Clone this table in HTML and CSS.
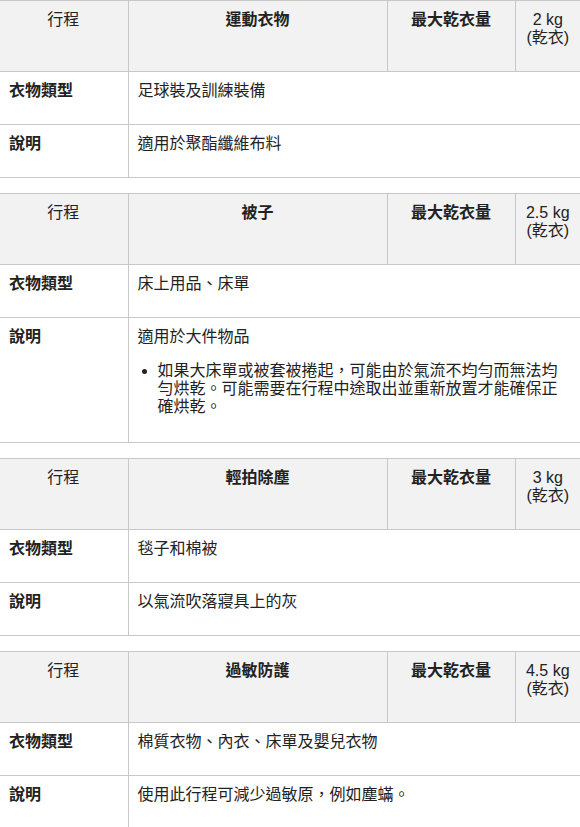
FILE: index.html
```html
<!DOCTYPE html>
<html lang="zh-Hant">
<head>
<meta charset="utf-8">
<title>行程</title>
<link rel="stylesheet" href="styles.css">
</head>
<body>
<div class="page">
  <table class="cycle">
    <colgroup><col class="c1"><col class="c2"><col class="c3"><col class="c4"></colgroup>
    <thead>
      <tr>
        <th class="h-label"><p>行程</p></th>
        <th class="h-name"><p>運動衣物</p></th>
        <th class="h-name"><p>最大乾衣量</p></th>
        <th class="h-load"><p>2 kg (乾衣)</p></th>
      </tr>
    </thead>
    <tbody>
      <tr><th class="row-label"><p>衣物類型</p></th><td colspan="3"><p>足球裝及訓練裝備</p></td></tr>
      <tr><th class="row-label"><p>說明</p></th><td colspan="3"><p>適用於聚酯纖維布料</p></td></tr>
    </tbody>
  </table>

  <table class="cycle">
    <colgroup><col class="c1"><col class="c2"><col class="c3"><col class="c4"></colgroup>
    <thead>
      <tr>
        <th class="h-label"><p>行程</p></th>
        <th class="h-name"><p>被子</p></th>
        <th class="h-name"><p>最大乾衣量</p></th>
        <th class="h-load"><p>2.5 kg (乾衣)</p></th>
      </tr>
    </thead>
    <tbody>
      <tr><th class="row-label"><p>衣物類型</p></th><td colspan="3"><p>床上用品、床單</p></td></tr>
      <tr><th class="row-label"><p>說明</p></th><td colspan="3"><p>適用於大件物品</p>
        <ul><li>如果大床單或被套被捲起，可能由於氣流不均勻而無法均勻烘乾。可能需要在行程中途取出並重新放置才能確保正確烘乾。</li></ul></td></tr>
    </tbody>
  </table>

  <table class="cycle">
    <colgroup><col class="c1"><col class="c2"><col class="c3"><col class="c4"></colgroup>
    <thead>
      <tr>
        <th class="h-label"><p>行程</p></th>
        <th class="h-name"><p>輕拍除塵</p></th>
        <th class="h-name"><p>最大乾衣量</p></th>
        <th class="h-load"><p>3 kg (乾衣)</p></th>
      </tr>
    </thead>
    <tbody>
      <tr><th class="row-label"><p>衣物類型</p></th><td colspan="3"><p>毯子和棉被</p></td></tr>
      <tr><th class="row-label"><p>說明</p></th><td colspan="3"><p>以氣流吹落寢具上的灰</p></td></tr>
    </tbody>
  </table>

  <table class="cycle">
    <colgroup><col class="c1"><col class="c2"><col class="c3"><col class="c4"></colgroup>
    <thead>
      <tr>
        <th class="h-label"><p>行程</p></th>
        <th class="h-name"><p>過敏防護</p></th>
        <th class="h-name"><p>最大乾衣量</p></th>
        <th class="h-load"><p>4.5 kg (乾衣)</p></th>
      </tr>
    </thead>
    <tbody>
      <tr><th class="row-label"><p>衣物類型</p></th><td colspan="3"><p>棉質衣物、內衣、床單及嬰兒衣物</p></td></tr>
      <tr><th class="row-label"><p>說明</p></th><td colspan="3"><p>使用此行程可減少過敏原，例如塵蟎。</p></td></tr>
    </tbody>
  </table>
</div>
</body>
</html>
```

FILE: styles.css
```css
html, body {
  margin: 0;
  padding: 0;
  background: #ffffff;
}

body {
  font-family: "Liberation Sans", "Noto Sans CJK TC", Arial, sans-serif;
  font-size: 16px;
  line-height: 18px;
  color: #222222;
}

.page {
  width: 580px;
}

.cycle {
  width: 580px;
  table-layout: fixed;
  border-collapse: collapse;
  margin: 0 0 15px 0;
}

.c1 { width: 128px; }
.c2 { width: 259px; }
.c3 { width: 128px; }
.c4 { width: 65px; }

.cycle th,
.cycle td {
  border: 1px solid #c8c8c8;
  padding: 10px 10px 10px 10px;
  vertical-align: top;
}

.cycle tr > :first-child {
  border-left: none;
  padding-left: 9px;
}

.cycle tr > :last-child {
  border-right: none;
}

.cycle p {
  margin: 0 0 14px 0;
}

.cycle thead th {
  background: #f2f2f2;
  text-align: center;
}

.h-label,
.h-load {
  font-weight: normal;
}

.h-name {
  font-weight: bold;
}

.row-label {
  text-align: left;
  font-weight: bold;
}

.cycle td {
  text-align: left;
  font-weight: normal;
  padding-left: 9px;
}

.cycle ul {
  margin: 16px 0 16px 0;
  padding-left: 20px;
}

.cycle li {
  margin: 0;
}
```
